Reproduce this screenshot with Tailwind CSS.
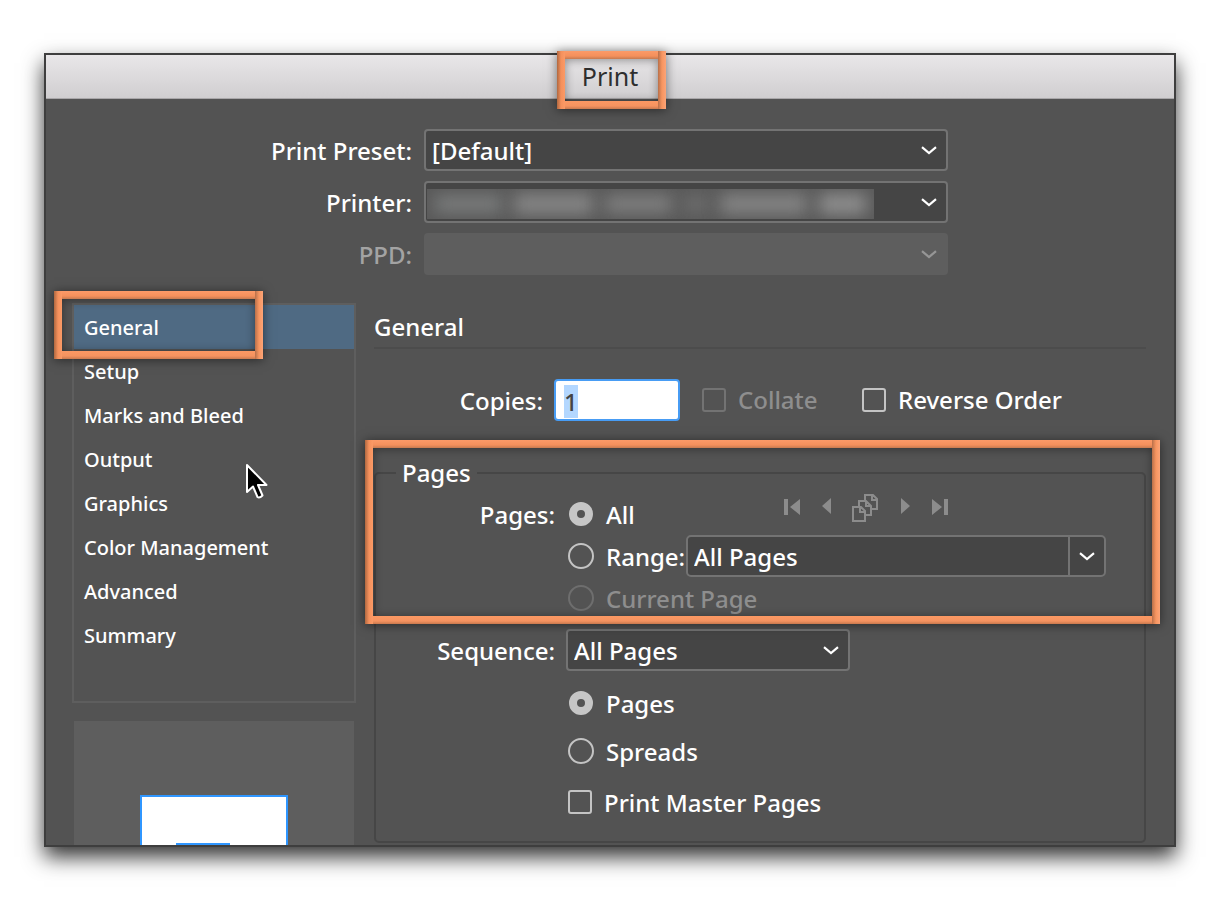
<!DOCTYPE html>
<html lang="en">
<head>
<meta charset="utf-8">
<meta name="viewport" content="width=device-width, initial-scale=1">
<title>Print</title>
<script src="https://cdn.jsdelivr.net/npm/@tailwindcss/browser@4"></script>
</head>
<body class="flex h-screen flex-col overflow-hidden bg-white px-11 pt-[53px] pb-13 font-['Noto_Sans',sans-serif] text-2xl font-medium text-white">
<svg class="hidden">
  <symbol id="chevron" viewBox="0 0 16 9"><path d="M1 1.2 8 7l7-5.800" fill="none" stroke="currentColor" stroke-width="2.200"/></symbol>
</svg>
<main class="relative flex min-h-0 flex-1 flex-col border-2 border-[#3e3e3e] bg-[#535353] shadow-[0_10px_20px_0_rgba(0,0,0,0.8)]">
  <header class="relative flex h-11 shrink-0 items-center justify-center border-b border-[#a9a7a9] bg-linear-to-b from-[#e9e7e9] to-[#d0ced0]">
    <h1 class="text-[25px] font-normal text-[#2e2e2e]">Print</h1>
    <span class="pointer-events-none absolute -top-1 left-1/2 h-[58px] w-[109px] -translate-x-[53px] bg-no-repeat shadow-[0_1px_10px_rgba(0,0,0,0.5)] [background-image:linear-gradient(to_right,#b06840,#f4905c_4px,#fb9a66_8px),linear-gradient(to_left,#fca477,#f79560_4px,#b8704a_8px),linear-gradient(to_bottom,#fb9a68,#f4905c_5px,#c67a50_8px),linear-gradient(to_top,#c9794e,#f59360_3px,#fb9863_8px)] [background-position:left,right,top,bottom] [background-size:8px_100%,8px_100%,100%_8px,100%_8px]"><span class="absolute inset-2 shadow-[inset_0_1px_10px_rgba(0,0,0,0.4)]"></span></span>
  </header>

  <form class="flex min-h-0 flex-1 flex-col overflow-hidden pt-[30px]">
    <div class="grid grid-cols-[366px_524px] items-center gap-x-3 gap-y-2.5">
      <label for="preset" class="pt-0.5 text-right">Print Preset:</label>
      <div class="relative">
        <select id="preset" class="h-[42px] w-full appearance-none rounded-[4px] border-2 border-[#737373] bg-[#454545] px-1.5 pt-0.5"><option>[Default]</option></select>
        <svg class="pointer-events-none absolute top-[17px] right-[11px] h-[9px] w-4"><use href="#chevron"/></svg>
      </div>
      <label for="printer" class="pt-0.5 text-right">Printer:</label>
      <div class="relative">
        <select id="printer" class="h-[42px] w-full appearance-none rounded-[4px] border-2 border-[#737373] bg-[#454545] px-1.5"><option></option></select>
        <span class="pointer-events-none absolute top-2 left-[3px] flex h-[30px] w-[447px] items-center gap-3 overflow-hidden bg-[#5a5a5a] px-2">
          <span class="h-4 w-17 bg-[#7c7e7e] blur-[8px]"></span>
          <span class="h-5 w-20 bg-[#868686] blur-[8px]"></span>
          <span class="h-4 w-17 bg-[#828282] blur-[8px]"></span>
          <span class="h-4 w-6 bg-[#6e6e6e] blur-[8px]"></span>
          <span class="h-5 w-22 bg-[#848484] blur-[8px]"></span>
          <span class="h-5 w-12 bg-[#8f8f8f] blur-[8px]"></span>
        </span>
        <svg class="pointer-events-none absolute top-[17px] right-[11px] h-[9px] w-4"><use href="#chevron"/></svg>
      </div>
      <label for="ppd" class="pt-0.5 text-right text-[#a3a3a3]">PPD:</label>
      <div class="relative text-[#969696]">
        <select id="ppd" disabled class="h-[42px] w-full appearance-none rounded-[4px] bg-[#5e5e5e] px-2 opacity-100"><option></option></select>
        <svg class="pointer-events-none absolute top-[17px] right-[11px] h-[9px] w-4"><use href="#chevron"/></svg>
      </div>
    </div>

    <div class="mt-7 flex min-h-0 flex-1 gap-[18px] pr-7 pl-[26px]">
      <aside class="flex w-[284px] shrink-0 flex-col">
        <nav class="relative h-[400px] shrink-0 border-2 border-[#5e5e5e] text-xl">
          <a href="#general" class="flex h-11 items-center bg-[#4f6a83] px-2.5 pt-0.5">General</a>
          <a href="#setup" class="flex h-11 items-center px-2.5 pt-0.5">Setup</a>
          <a href="#marks" class="flex h-11 items-center px-2.5 pt-0.5">Marks and Bleed</a>
          <a href="#output" class="flex h-11 items-center px-2.5 pt-0.5">Output</a>
          <a href="#graphics" class="flex h-11 items-center px-2.5 pt-0.5">Graphics</a>
          <a href="#color" class="flex h-11 items-center px-2.5 pt-0.5">Color Management</a>
          <a href="#advanced" class="flex h-11 items-center px-2.5 pt-0.5">Advanced</a>
          <a href="#summary" class="flex h-11 items-center px-2.5 pt-0.5">Summary</a>
          <span class="pointer-events-none absolute -top-3.5 -left-5 h-[68px] w-[209px] bg-no-repeat shadow-[0_1px_10px_rgba(0,0,0,0.5)] [background-image:linear-gradient(to_right,#b06840,#f4905c_4px,#fb9a66_8px),linear-gradient(to_left,#fca477,#f79560_4px,#b8704a_8px),linear-gradient(to_bottom,#fb9a68,#f4905c_5px,#c67a50_8px),linear-gradient(to_top,#c9794e,#f59360_3px,#fb9863_8px)] [background-position:left,right,top,bottom] [background-size:8px_100%,8px_100%,100%_8px,100%_8px]"><span class="absolute inset-2 shadow-[inset_0_1px_10px_rgba(0,0,0,0.4)]"></span></span>
          <svg class="pointer-events-none absolute top-[158px] left-[171px] h-9 w-6" viewBox="0 0 24 36"><path d="M2 2v27l6-5.500 4.500 10.500q2 1.500 5-1.500L13 22h8.500z" fill="#000" stroke="#fff" stroke-width="2" stroke-linejoin="round"/></svg>
        </nav>
        <div class="mx-0.5 mt-[18px] flex min-h-0 flex-1 flex-col items-center overflow-hidden bg-[#5e5e5e] pt-[74px]">
          <div class="h-[190px] w-[148px] shrink-0 border-2 border-[#2f96ff] bg-white pt-[46px] pl-[34px]">
            <div class="h-[90px] w-[54px] bg-[#2f96ff]"></div>
          </div>
        </div>
      </aside>

      <section id="general" class="relative min-w-0 flex-1">
        <h2 class="h-[46px] border-b-2 border-[#4c4c4c] leading-[48px]">General</h2>
        <div class="mt-[30px] flex items-center">
          <label for="copies" class="w-[169px] pt-0.5 text-right">Copies:</label>
          <input id="copies" type="text" value="1" class="ml-[11px] h-[42px] w-[126px] rounded-[4px] border-2 border-[#479cf4] bg-white px-2 pt-0.5 text-[#444] outline-none selection:bg-[#b3d7ff] selection:text-[#444]">
          <input id="collate" type="checkbox" disabled class="ml-[22px] size-6 appearance-none rounded-[3px] border-2 border-[#737373]">
          <label for="collate" class="ml-3 w-[124px] text-[#8e8e8e]">Collate</label>
          <input id="reverse" type="checkbox" class="size-6 appearance-none rounded-[3px] border-2 border-[#c4c4c4]">
          <label for="reverse" class="ml-3">Reverse Order</label>
        </div>

        <fieldset class="relative mt-9 rounded-[5px] border-2 border-[#464646] px-5 pb-3">
          <legend class="px-1.5 leading-8">Pages</legend>
          <div class="-ml-5 grid grid-cols-[179px_1fr] gap-x-[13px]">
            <span class="pt-[5px] text-right leading-[42px]">Pages:</span>
            <div class="pt-1">
              <div class="flex h-[42px] items-center">
                <input id="all" type="radio" name="pages" checked class="mr-[13px] ml-px size-6 appearance-none rounded-full border-8 border-[#c6c6c6]">
                <label for="all" class="w-[178px] pt-0.5">All</label>
                <div class="flex text-[#8c8c8c]">
                  <button type="button" aria-label="First page" class="mr-[22px] -mt-3.5"><svg class="h-4 w-4" viewBox="0 0 16 16" fill="currentColor"><path d="M0 0h4v16H0zM16 0v16L6 8z"/></svg></button>
                  <button type="button" aria-label="Previous page" class="mr-[21px] -mt-4"><svg class="h-4 w-[9px]" viewBox="0 0 9 16" fill="currentColor"><path d="M9 0v16L0 8z"/></svg></button>
                  <button type="button" aria-label="Choose pages" class="mr-[23px] -mt-3"><svg class="h-7 w-[26px]" viewBox="0 0 26 28" fill="none" stroke="currentColor" stroke-width="2"><path d="M1 13h8l4 4v10H1zM8 13v5h5M7 12V7h7l5 5v9h-5M14 7v5h5M13 6V1h8l4 4v10h-5M20 1v5h5"/></svg></button>
                  <button type="button" aria-label="Next page" class="mr-[22px] -mt-4"><svg class="h-4 w-[9px]" viewBox="0 0 9 16" fill="currentColor"><path d="M0 0v16l9-8z"/></svg></button>
                  <button type="button" aria-label="Last page" class="-mt-3.5"><svg class="h-4 w-4" viewBox="0 0 16 16" fill="currentColor"><path d="M12 0h4v16h-4zM0 0v16l10-8z"/></svg></button>
                </div>
              </div>
              <div class="flex h-[42px] items-center">
                <input id="range" type="radio" name="pages" class="mr-3 size-[26px] shrink-0 appearance-none rounded-full border-2 border-[#c4c4c4]">
                <label for="range" class="w-20 pt-0.5 whitespace-nowrap">Range:</label>
                <div class="flex h-[42px] w-[420px] overflow-hidden rounded-[5px] border-2 border-[#737373] bg-[#454545]">
                  <input type="text" aria-label="Page range" value="All Pages" class="min-w-0 flex-1 px-1.5 pt-0.5 outline-none">
                  <button type="button" aria-label="Show ranges" class="flex w-9 items-center justify-center border-l-2 border-[#737373]"><svg class="h-[9px] w-4"><use href="#chevron"/></svg></button>
                </div>
              </div>
              <div class="flex h-[42px] items-center text-[#8e8e8e]">
                <input id="current" type="radio" name="pages" disabled class="mr-3 size-[26px] appearance-none rounded-full border-2 border-[#6e6e6e]">
                <label for="current" class="pt-0.5">Current Page</label>
              </div>
            </div>
            <label for="sequence" class="mt-[11px] text-right leading-[42px]">Sequence:</label>
            <div class="relative mt-2.5 -ml-0.5 w-[284px]">
              <select id="sequence" class="h-[42px] w-full appearance-none rounded-[4px] border-2 border-[#737373] bg-[#454545] px-1.5 pt-0.5"><option>All Pages</option></select>
              <svg class="pointer-events-none absolute top-[17px] right-[11px] h-[9px] w-4"><use href="#chevron"/></svg>
            </div>
            <div class="col-start-2 pt-[7px]">
              <div class="flex h-12 items-center">
                <input id="bypages" type="radio" name="order" checked class="mr-[13px] ml-px size-6 appearance-none rounded-full border-8 border-[#c6c6c6]">
                <label for="bypages" class="pt-0.5">Pages</label>
              </div>
              <div class="flex h-12 items-center">
                <input id="spreads" type="radio" name="order" class="mr-3 size-[26px] appearance-none rounded-full border-2 border-[#c4c4c4]">
                <label for="spreads" class="pt-0.5">Spreads</label>
              </div>
              <div class="flex h-[54px] items-center">
                <input id="master" type="checkbox" class="mr-3 size-6 appearance-none rounded-[3px] border-2 border-[#c4c4c4]">
                <label for="master" class="pt-0.5">Print Master Pages</label>
              </div>
            </div>
          </div>
        </fieldset>
        <span class="pointer-events-none absolute top-[137px] -right-3.5 -left-[9px] h-[184px] bg-no-repeat shadow-[0_1px_10px_rgba(0,0,0,0.5)] [background-image:linear-gradient(to_right,#b06840,#f4905c_4px,#fb9a66_8px),linear-gradient(to_left,#fca477,#f79560_4px,#b8704a_8px),linear-gradient(to_bottom,#fb9a68,#f4905c_5px,#c67a50_8px),linear-gradient(to_top,#c9794e,#f59360_3px,#fb9863_8px)] [background-position:left,right,top,bottom] [background-size:8px_100%,8px_100%,100%_8px,100%_8px]"><span class="absolute inset-2 shadow-[inset_0_1px_10px_rgba(0,0,0,0.4)]"></span></span>
      </section>
    </div>
  </form>
</main>
<script>
  const copies = document.getElementById('copies');
  copies.focus({ preventScroll: true });
  copies.select();
</script>
</body>
</html>
